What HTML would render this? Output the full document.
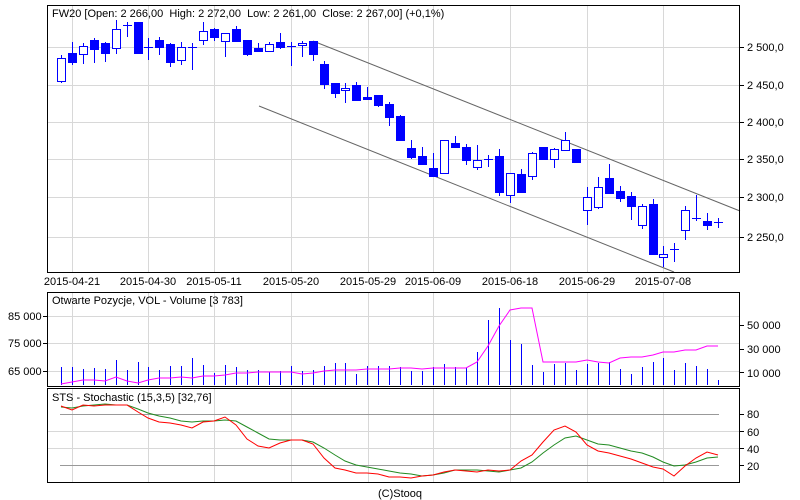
<!DOCTYPE html>
<html><head><meta charset="utf-8"><style>
html,body{margin:0;padding:0;background:#fff;width:800px;height:500px;overflow:hidden}
svg text{font-family:"Liberation Sans",sans-serif;font-size:11px;fill:#000}
</style></head><body>
<svg width="800" height="500" xmlns="http://www.w3.org/2000/svg" shape-rendering="crispEdges">
<g stroke="#d8d8d8" stroke-width="1">
<line x1="72.5" y1="6" x2="72.5" y2="272"/><line x1="148.5" y1="6" x2="148.5" y2="272"/><line x1="214.5" y1="6" x2="214.5" y2="272"/><line x1="291.5" y1="6" x2="291.5" y2="272"/><line x1="368.5" y1="6" x2="368.5" y2="272"/><line x1="433.5" y1="6" x2="433.5" y2="272"/><line x1="510.5" y1="6" x2="510.5" y2="272"/><line x1="587.5" y1="6" x2="587.5" y2="272"/><line x1="663.5" y1="6" x2="663.5" y2="272"/>
<line x1="48" y1="47.5" x2="739" y2="47.5"/><line x1="48" y1="85.5" x2="739" y2="85.5"/><line x1="48" y1="122.5" x2="739" y2="122.5"/><line x1="48" y1="159.5" x2="739" y2="159.5"/><line x1="48" y1="197.5" x2="739" y2="197.5"/><line x1="48" y1="237.5" x2="739" y2="237.5"/>
<line x1="72.5" y1="293" x2="72.5" y2="386"/><line x1="148.5" y1="293" x2="148.5" y2="386"/><line x1="214.5" y1="293" x2="214.5" y2="386"/><line x1="291.5" y1="293" x2="291.5" y2="386"/><line x1="368.5" y1="293" x2="368.5" y2="386"/><line x1="433.5" y1="293" x2="433.5" y2="386"/><line x1="510.5" y1="293" x2="510.5" y2="386"/><line x1="587.5" y1="293" x2="587.5" y2="386"/><line x1="663.5" y1="293" x2="663.5" y2="386"/>
<line x1="48" y1="316.5" x2="739" y2="316.5"/><line x1="48" y1="343.5" x2="739" y2="343.5"/><line x1="48" y1="371.5" x2="739" y2="371.5"/>
<line x1="72.5" y1="389" x2="72.5" y2="482"/><line x1="148.5" y1="389" x2="148.5" y2="482"/><line x1="214.5" y1="389" x2="214.5" y2="482"/><line x1="291.5" y1="389" x2="291.5" y2="482"/><line x1="368.5" y1="389" x2="368.5" y2="482"/><line x1="433.5" y1="389" x2="433.5" y2="482"/><line x1="510.5" y1="389" x2="510.5" y2="482"/><line x1="587.5" y1="389" x2="587.5" y2="482"/><line x1="663.5" y1="389" x2="663.5" y2="482"/>
<line x1="48" y1="431.5" x2="739" y2="431.5"/><line x1="48" y1="448.5" x2="739" y2="448.5"/>
</g>
<g stroke="#999"><line x1="60" y1="414.5" x2="719" y2="414.5"/><line x1="60" y1="465.5" x2="719" y2="465.5"/></g>
<g stroke="#666" shape-rendering="auto"><line x1="313" y1="41" x2="740" y2="211"/><line x1="259" y1="106" x2="674" y2="272"/></g>
<g stroke="#00f" fill="#00f" id="c"></g>
<g fill="none" stroke="#000"><rect x="47.5" y="5.5" width="692" height="267"/><rect x="47.5" y="292.5" width="692" height="94"/><rect x="47.5" y="388.5" width="692" height="94"/></g>
<g stroke="#000"><line x1="740" y1="47.5" x2="744" y2="47.5"/><line x1="740" y1="85.5" x2="744" y2="85.5"/><line x1="740" y1="122.5" x2="744" y2="122.5"/><line x1="740" y1="159.5" x2="744" y2="159.5"/><line x1="740" y1="197.5" x2="744" y2="197.5"/><line x1="740" y1="237.5" x2="744" y2="237.5"/>
<line x1="740" y1="325.5" x2="744" y2="325.5"/><line x1="740" y1="349.5" x2="744" y2="349.5"/><line x1="740" y1="372.5" x2="744" y2="372.5"/><line x1="43" y1="316.5" x2="47" y2="316.5"/><line x1="43" y1="343.5" x2="47" y2="343.5"/><line x1="43" y1="371.5" x2="47" y2="371.5"/>
<line x1="740" y1="414.5" x2="744" y2="414.5"/><line x1="740" y1="431.5" x2="744" y2="431.5"/><line x1="740" y1="448.5" x2="744" y2="448.5"/><line x1="740" y1="465.5" x2="744" y2="465.5"/></g>
<g stroke="#00f" id="v"></g>
<polyline fill="none" stroke="#f0f" shape-rendering="auto" points="61,384 72,382 83,380 94,380 105,381 116,377 127,381 138,383 148,380 159,378 170,378 181,377 192,378 203,376 214,376 225,375 236,373 247,373 258,372 269,372 280,372 291,372 302,374 313,373 324,371 335,370 345,370 356,370 367,369 378,369 389,369 400,368 411,368 422,369 433,368 444,368 455,368 466,368 477,362 488,346 499,326 510,310 521,308 532,308 543,362 554,362 565,362 576,362 587,360 598,362 609,363 620,358 631,357 642,357 653,355 663,352 674,352 685,350 696,350 707,346 718,346"/>
<polyline fill="none" stroke="#228b22" shape-rendering="auto" points="61,407 72,408 83,406 94,405 105,404 116,405 127,405 138,409 148,413 159,416 170,418 181,421 192,422 203,421 214,421 225,420 236,421 247,427 258,433 269,439 280,440 291,440 302,440 313,442 324,448 335,455 345,461 356,465 367,467 378,469 389,471 400,473 411,474 422,476 433,475 444,473 455,470 466,470 477,470 488,471 499,472 510,470 521,468 532,462 543,453 554,445 565,438 576,436 587,440 598,444 609,445 620,448 631,451 642,453 653,457 663,462 674,466 685,465 696,462 707,458 718,457"/>
<polyline fill="none" stroke="#f00" shape-rendering="auto" points="61,406 72,410 83,405 94,406 105,405 116,405 127,405 138,412 148,418 159,422 170,423 181,425 192,428 203,422 214,421 225,417 236,425 247,439 258,446 269,448 280,443 291,440 302,440 313,444 324,458 335,468 345,470 356,473 367,473 378,474 389,477 400,477 411,478 422,476 433,475 444,472 455,470 466,471 477,472 488,470 499,471 510,470 521,461 532,455 543,442 554,430 565,426 576,432 587,445 598,451 609,453 620,456 631,459 642,463 653,467 663,469 674,476 685,466 696,458 707,452 718,455"/>
<text x="52" y="17" xml:space="preserve">FW20 [Open: 2 266,00  High: 2 272,00  Low: 2 261,00  Close: 2 267,00] (+0,1%)</text>
<text x="52" y="304">Otwarte Pozycje, VOL - Volume [3 783]</text>
<text x="52" y="401">STS - Stochastic (15,3,5) [32,76]</text>
<g><text x="747" y="51">2 500,0</text><text x="747" y="89">2 450,0</text><text x="747" y="126">2 400,0</text><text x="747" y="163">2 350,0</text><text x="747" y="201">2 300,0</text><text x="747" y="241">2 250,0</text>
<text x="747" y="329">50 000</text><text x="747" y="353">30 000</text><text x="747" y="377">10 000</text>
<text x="8" y="320">85 000</text><text x="8" y="347">75 000</text><text x="8" y="375">65 000</text>
<text x="747" y="418">80</text><text x="747" y="436">60</text><text x="747" y="453">40</text><text x="747" y="470">20</text></g>
<g text-anchor="middle"><text x="72" y="285">2015-04-21</text><text x="148" y="285">2015-04-30</text><text x="214" y="285">2015-05-11</text><text x="291" y="285">2015-05-20</text><text x="368" y="285">2015-05-29</text><text x="433" y="285">2015-06-09</text><text x="510" y="285">2015-06-18</text><text x="587" y="285">2015-06-29</text><text x="663" y="285">2015-07-08</text><text x="400" y="497">(C)Stooq</text></g>
</svg>
<script>
var C=[[61,'h',58,81,55,83],[72,'f',53,62,42,65],[83,'h',46,54,43,64],[94,'f',40,49,38,63],[105,'f',43,53,42,62],[116,'h',29,48,20,54],[127,'x',25,25,22,37],[138,'f',22,53,22,53],[148,'x',47,47,38,60],[159,'f',40,47,37,55],[170,'f',44,62,43,67],[181,'h',47,60,42,65],[192,'x',47,47,43,70],[203,'h',31,40,22,45],[214,'f',29,37,28,41],[225,'h',33,41,33,57],[236,'f',29,41,26,42],[247,'f',40,54,40,56],[258,'f',48,51,43,52],[269,'h',44,51,42,51],[280,'f',42,47,33,49],[291,'x',46,46,42,66],[302,'h',43,45,41,57],[313,'f',41,54,41,61],[324,'f',64,84,61,89],[335,'f',83,93,83,98],[345,'h',88,90,83,103],[356,'f',85,100,82,100],[367,'f',97,99,87,100],[378,'f',95,105,95,107],[389,'f',104,117,102,126],[400,'f',116,140,115,140],[411,'f',148,157,140,159],[422,'f',156,164,147,165],[433,'f',168,176,153,176],[444,'h',140,173,140,173],[455,'f',143,147,136,147],[466,'f',147,160,144,165],[477,'h',160,167,145,170],[488,'x',159,159,155,167],[499,'f',156,192,149,196],[510,'h',173,195,173,203],[521,'f',174,192,169,192],[532,'h',153,176,152,180],[543,'f',147,159,147,159],[554,'h',149,159,148,168],[565,'h',140,150,132,150],[576,'f',149,162,149,163],[587,'h',197,210,187,225],[598,'h',187,207,177,209],[609,'f',178,193,164,193],[620,'f',191,198,186,202],[631,'f',196,206,192,220],[642,'h',206,225,204,229],[653,'f',204,254,199,254],[663,'h',254,257,246,267],[674,'x',249,249,243,262],[685,'h',210,230,206,240],[696,'x',218,218,195,221],[707,'f',221,225,213,230],[718,'x',222,222,218,228]];
var s='';C.forEach(function(c){var x=c[0];s+='<line x1="'+(x+.5)+'" y1="'+c[4]+'" x2="'+(x+.5)+'" y2="'+c[5]+'"/>';
if(c[1]=='x')s+='<line x1="'+(x-4)+'" y1="'+(c[2]+.5)+'" x2="'+(x+5)+'" y2="'+(c[2]+.5)+'"/>';
else s+='<rect x="'+(x-3.5)+'" y="'+(c[2]+.5)+'" width="8" height="'+(c[3]-c[2])+'" fill="'+(c[1]=='h'?'#fff':'#00f')+'"/>';});
document.getElementById('c').innerHTML=s;
var V=[367,367,369,368,369,360,370,362,367,370,366,366,358,365,373,365,367,370,370,372,371,366,371,370,366,363,363,374,366,366,366,367,371,371,367,364,367,368,352,320,308,340,344,365,372,364,363,370,364,363,362,369,374,367,362,358,370,363,366,369,380];
var t='';V.forEach(function(v,i){var x=C[i][0]+.5;t+='<line x1="'+x+'" y1="'+v+'" x2="'+x+'" y2="385"/>';});
document.getElementById('v').innerHTML=t;
</script>
</body></html>
